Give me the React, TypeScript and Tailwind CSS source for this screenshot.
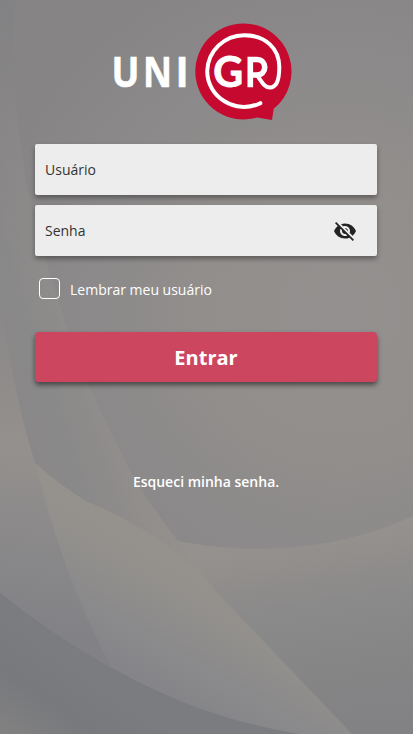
import { MdVisibilityOff } from "react-icons/md";

function Backdrop() {
  return (
    <svg className="absolute inset-0 h-full w-full" viewBox="0 0 413 734" preserveAspectRatio="none" aria-hidden="true">
      <defs>
        <linearGradient id="base" gradientUnits="userSpaceOnUse" x1="280" y1="540" x2="310" y2="734">
          <stop offset="0" stopColor="#95918e" />
          <stop offset="0.14" stopColor="#918e8c" />
          <stop offset="0.35" stopColor="#8b8a8a" />
          <stop offset="1" stopColor="#828183" />
        </linearGradient>
        <linearGradient id="edge" gradientUnits="userSpaceOnUse" x1="20" y1="440" x2="140" y2="400">
          <stop offset="0" stopColor="#898788" />
          <stop offset="0.35" stopColor="#8a8989" />
          <stop offset="0.75" stopColor="#918e8c" />
          <stop offset="1" stopColor="#94908d" />
        </linearGradient>
        <radialGradient id="disc" gradientUnits="userSpaceOnUse" cx="340" cy="310" r="370">
          <stop offset="0" stopColor="#94908f" />
          <stop offset="0.4" stopColor="#918e8c" />
          <stop offset="0.65" stopColor="#8c8a8a" />
          <stop offset="1" stopColor="#868485" />
        </radialGradient>
        <linearGradient id="sweep" gradientUnits="userSpaceOnUse" x1="200" y1="575" x2="125" y2="705">
          <stop offset="0" stopColor="#95918d" />
          <stop offset="0.26" stopColor="#918f8c" />
          <stop offset="0.6" stopColor="#89888b" />
          <stop offset="1" stopColor="#818286" />
        </linearGradient>
        <linearGradient id="left" gradientUnits="userSpaceOnUse" x1="30" y1="450" x2="0" y2="620">
          <stop offset="0" stopColor="#94908d" />
          <stop offset="0.35" stopColor="#8d8b8b" />
          <stop offset="1" stopColor="#828286" />
        </linearGradient>
        <linearGradient id="leftTop" gradientUnits="userSpaceOnUse" x1="0" y1="295" x2="0" y2="450">
          <stop offset="0" stopColor="#898788" />
          <stop offset="1" stopColor="#94908d" />
        </linearGradient>
        <linearGradient id="corner" gradientUnits="userSpaceOnUse" x1="80" y1="660" x2="20" y2="745">
          <stop offset="0" stopColor="#7b7c80" />
          <stop offset="0.5" stopColor="#77797c" />
          <stop offset="1" stopColor="#828182" />
        </linearGradient>
        <linearGradient id="shade" gradientUnits="userSpaceOnUse" x1="0" y1="0" x2="0" y2="280">
          <stop offset="0" stopColor="#828183" />
          <stop offset="1" stopColor="#828183" stopOpacity="0" />
        </linearGradient>
      </defs>
      <rect width="413" height="734" fill="url(#base)" />
      <path d="M0 0H60L178 541L215 590L35 490L0 350Z" fill="url(#edge)" />
      <path d="M0 0H60V280H0Z" fill="url(#shade)" />
      <path d="M16 0H413V516C340 550 255 556 178 541C150 505 133 480 110 430C88 388 70 340 55 290C25 200 8 100 16 0Z" fill="url(#disc)" />
      <path d="M35 463C51 477 69 491 88 502C125 517 175 545 207 582L352 734H275C220 721 165 697 112 668C78 605 55 540 35 463Z" fill="url(#sweep)" />
      <path d="M0 295C7 350 18 405 31 450H0Z" fill="url(#leftTop)" />
      <path d="M0 449.500H31L35 463C55 540 78 605 112 668C65 641 30 617 0 592Z" fill="url(#left)" />
      <path d="M0 592C30 617 65 641 112 668C165 697 220 721 300 734H0Z" fill="url(#corner)" />
    </svg>
  );
}

function Logo() {
  return (
    <svg className="h-[100px] w-[193px]" viewBox="100 22 193 100" role="img" aria-label="UNI GR">
      <path d="M244.2 23.5A48 48 0 0 1 273.700 108.8L272 120L257 117.5A48 48 0 1 1 244.2 23.500Z" fill="#c60a2f" />
      <path
        d="M260.3 103.2C235.500 115 207.200 97 207.200 71A37 37 0 0 1 244 35.200C266 35.200 279.300 49 279.300 67C279.300 80 276 87.500 270 87.500C265 87.500 263 84 257 75"
        fill="none" stroke="#fff" strokeWidth="4" strokeLinecap="round"
      />
      <g fill="#fff" stroke="#fff" strokeWidth=".6" className="font-['Open_Sans',sans-serif] font-bold" fontSize="42">
        <text transform="translate(111.600 87) scale(.88 1)">U</text>
        <text transform="translate(143.100 87) scale(.85 1)">N</text>
        <text transform="translate(175.400 87) scale(.95 1)">I</text>
        <text transform="translate(213.200 87) scale(.98 1)" strokeWidth=".8" className="font-['Lato',sans-serif]">G</text>
      </g>
      <path d="M250.300 87.300V59.500H256.500C267.500 59.500 267.500 75 256.500 75H250" fill="none" stroke="#fff" strokeWidth="5.600" />
    </svg>
  );
}

const field =
  "flex h-[51px] items-center rounded-[2px] bg-[#ededed] pl-2.5 shadow-[0_3px_5px_rgba(0,0,0,0.35)]";
const input =
  "min-w-0 flex-1 bg-transparent text-[14px] text-[#333] outline-none placeholder:text-[#333] placeholder:opacity-100";

export default function App() {
  return (
    <main className="relative h-[734px] w-full overflow-hidden bg-[#8b8989] font-['Open_Sans','Noto_Sans',sans-serif]">
      <Backdrop />
      <form className="relative flex flex-col pt-[22px] pr-9 pl-[35px]" onSubmit={(e) => e.preventDefault()}>
        <div className="flex h-[122px] pl-[65px]">
          <Logo />
        </div>
        <div className={field}>
          <input className={input} placeholder="Usuário" aria-label="Usuário" />
        </div>
        <div className={`${field} mt-2.5`}>
          <input className={input} type="password" placeholder="Senha" aria-label="Senha" />
          <button type="button" className="mr-5" aria-label="Senha">
            <MdVisibilityOff className="size-6 text-[#242424]" />
          </button>
        </div>
        <label className="mt-[21px] flex h-[22px] items-center gap-2.5 pl-1 text-[14px] text-white">
          <input type="checkbox" className="size-[21px] appearance-none rounded-[4px] border border-white" />
          <span className="pt-[3px]">Lembrar meu usuário</span>
        </label>
        <button className="mt-[33px] h-[50px] rounded-[4px] bg-[#cd465f] pt-0.5 text-[20px] font-bold text-white shadow-[0_3px_5px_rgba(0,0,0,0.5)]">
          Entrar
        </button>
        <a href="#" className="mt-[90px] self-center text-[14px] leading-5 font-semibold text-white">
          Esqueci minha senha.
        </a>
      </form>
    </main>
  );
}
